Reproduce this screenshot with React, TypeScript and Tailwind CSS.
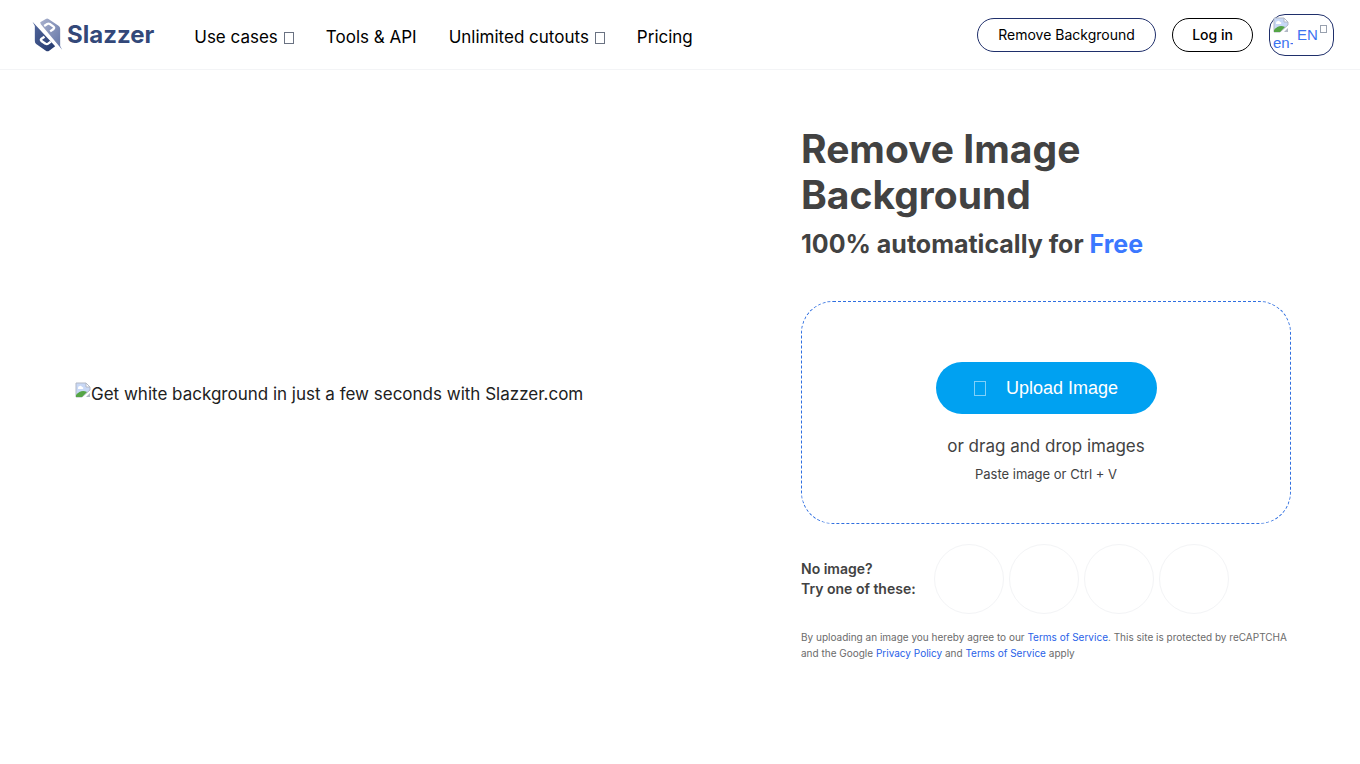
import React from "react";

const NAV_LINKS = [
  { label: "Use cases", hasMenu: true },
  { label: "Tools & API", hasMenu: false },
  { label: "Unlimited cutouts", hasMenu: true },
  { label: "Pricing", hasMenu: false },
];

const SAMPLES = ["Sample 1", "Sample 2", "Sample 3", "Sample 4"];

const LogoMark = () => (
  <svg viewBox="24 24 92 102" className="h-[34px] w-[31px]" aria-hidden="true">
    <defs>
      <linearGradient id="light" x1="0" y1="0" x2="1" y2="1">
        <stop offset="0" stopColor="#a9b1cd" />
        <stop offset="1" stopColor="#5d70a3" />
      </linearGradient>
      <linearGradient id="dark" x1="0" y1="0" x2="1" y2="1">
        <stop offset="0" stopColor="#55699f" />
        <stop offset="1" stopColor="#22376b" />
      </linearGradient>
    </defs>
    <path
      fill="url(#light)"
      d="M48 37 65 27Q69 24 73 27L103 47Q108 50 108 56V108L114 119 50 43Z"
    />
    <path
      fill="url(#dark)"
      d="M25 35 93 109 75 122Q70 126 65 122L36 102Q32 99 32 93V48Z"
    />
    <path
      d="M60 48 69 42Q73 40 77 42L88 50Q92 53 88 57L78 64"
      fill="none"
      stroke="#fff"
      strokeWidth="7"
    />
    <path
      d="M61 80 52 86Q48 89 52 93L64 101Q68 104 72 101L80 95"
      fill="none"
      stroke="#fff"
      strokeWidth="7"
    />
  </svg>
);

const BrokenImage = () => (
  <svg viewBox="0 0 16 16" className="size-4 shrink-0" aria-hidden="true">
    <path d="M1 1H11L15 5V8L7 15H1Z" fill="#c8d8f6" stroke="#b3b9c6" />
    <path d="M11 1V5H15Z" fill="#fff" stroke="#b3b9c6" />
    <path d="M3 6Q3 4 5 4Q6 3 7 5Q9 5 8 7H3Z" fill="#fff" />
    <path d="M1 13Q6 7 12 10L7 15H1Z" fill="#55a545" />
    <path d="M16 9 8 16H10L16 11Z" fill="#fff" />
    <path d="M15 11V15H11Z" fill="#b3b9c6" />
  </svg>
);

const App = () => {
  return (
    <div className="min-h-screen bg-white font-[Inter,sans-serif] text-black">
      <header className="flex min-h-[70px] flex-wrap items-center justify-between gap-4 border-b border-gray-100 pr-[26px] pl-8">
        <div className="flex flex-wrap items-center gap-10">
          <a href="#" className="flex items-center gap-1">
            <LogoMark />
            <span className="text-[24px] leading-8 font-bold text-[#334879]">
              Slazzer
            </span>
          </a>
          <nav className="flex flex-wrap items-center gap-x-8 pt-1">
            {NAV_LINKS.map(({ label, hasMenu }) => (
              <a
                key={label}
                href="#"
                className="flex items-center gap-1.5 text-[17px] leading-6"
              >
                {label}
                {hasMenu ? (
                  <span className="mt-0.5 h-3 w-[10px] border border-gray-500" />
                ) : null}
              </a>
            ))}
          </nav>
        </div>

        <div className="flex items-center gap-4">
          <button className="h-[34px] w-[179px] rounded-full border border-[#1f2f6b] text-[14px]">
            Remove Background
          </button>
          <button className="h-[34px] w-[81px] rounded-full border border-black text-[14px] font-medium">
            Log in
          </button>
          {/* language */}
          <button className="flex h-[42px] w-[65px] items-start rounded-[16px] border border-[#1f2f6b] pt-0.5 pl-[3px] font-['Liberation_Sans',sans-serif] text-[15px] text-[#3b73f0]">
            <span className="flex w-5 flex-col overflow-hidden text-left leading-5">
              <BrokenImage />
              en-
            </span>
            <span className="mt-2 ml-1 leading-5">EN</span>
            <span className="mt-2 ml-0.5 h-2 w-[7px] border border-gray-400" />
          </button>
        </div>
      </header>

      <main className="flex flex-col gap-10 px-6 py-14 lg:flex-row lg:items-center lg:pr-[69px] lg:pl-[75px]">
        <div className="flex flex-1 items-start">
          <BrokenImage />
          <p className="text-[17px] leading-6 text-[#212121]">
            Get white background in just a few seconds with Slazzer.com
          </p>
        </div>

        <div className="w-full text-[#424242] lg:w-[490px]">
          <h1 className="max-w-[360px] text-[39px] leading-[46px] font-bold">
            Remove Image Background
          </h1>
          <h2 className="mt-2 text-[25px] leading-9 font-bold">
            100% automatically for <span className="text-[#3b78ff]">Free</span>
          </h2>

          {/* upload */}
          <div className="mt-[39px] flex h-[223px] flex-col items-center rounded-[32px] border border-dashed border-[#2f6fe0] pt-[60px]">
            <button className="flex h-[52px] w-[221px] items-center justify-center gap-5 rounded-full bg-[#00a1f1] font-['Liberation_Sans',sans-serif] text-[18px] text-white">
              <span className="h-[15px] w-3 border border-[#7fd0f8]" />
              Upload Image
            </button>
            <p className="mt-5 text-[17px] leading-6">or drag and drop images</p>
            <p className="mt-1.5 text-[13px] leading-5">Paste image or Ctrl + V</p>
          </div>

          {/* samples */}
          <div className="mt-5 flex flex-wrap items-center gap-[18px]">
            <p className="text-[14px] leading-5 font-semibold">
              No image?
              <br />
              Try one of these:
            </p>
            <div className="flex gap-[5px]">
              {SAMPLES.map((label) => (
                <button
                  key={label}
                  aria-label={label}
                  className="size-[70px] rounded-full border border-gray-100"
                />
              ))}
            </div>
          </div>

          <p className="mt-[15px] text-[10px] leading-4 text-[#6b6b6b]">
            By uploading an image you hereby agree to our{" "}
            <a href="#" className="text-[#2962e8]">
              Terms of Service
            </a>
            . This site is protected by reCAPTCHA and the Google{" "}
            <a href="#" className="text-[#2962e8]">
              Privacy Policy
            </a>{" "}
            and{" "}
            <a href="#" className="text-[#2962e8]">
              Terms of Service
            </a>{" "}
            apply
          </p>
        </div>
      </main>
    </div>
  );
};

export default App;
